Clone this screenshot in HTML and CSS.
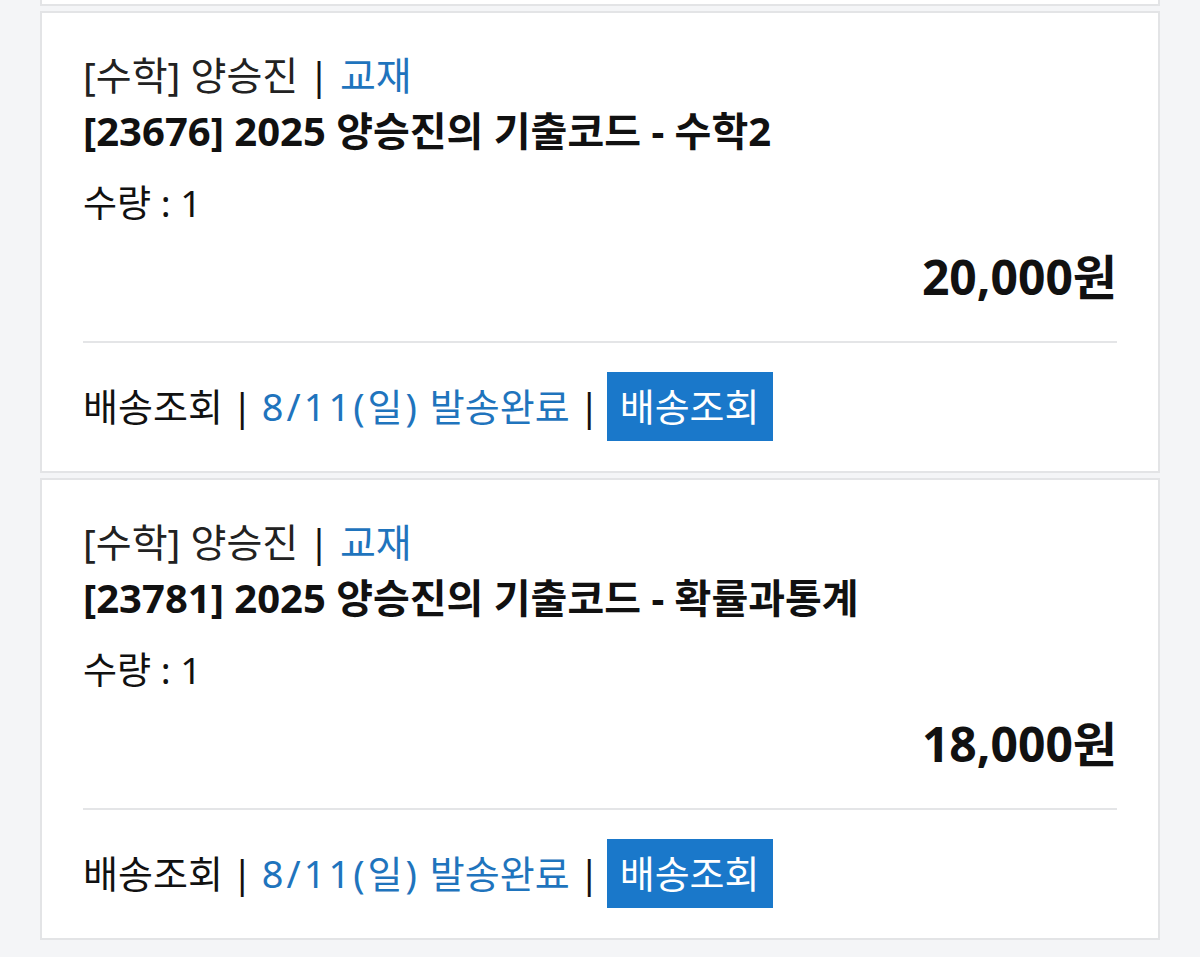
FILE: index.html
```html
<!DOCTYPE html>
<html lang="ko">
<head>
<meta charset="utf-8">
<link rel="stylesheet" href="styles.css">
</head>
<body>
<div class="list">
  <div class="card-stub"></div>

  <div class="card">
    <div class="info">
      <div class="meta">[수학] 양승진 <span class="sep">|</span> <span class="blue">교재</span></div>
      <div class="title">[23676] 2025 양승진의 기출코드 - 수학2</div>
      <div class="qty">수량 : 1</div>
      <div class="price">20,000원</div>
    </div>
    <div class="divider"></div>
    <div class="ship">
      <span>배송조회</span>
      <span class="sep">|</span>
      <span class="blue"><span class="date">8/11(일)</span> 발송완료</span>
      <span class="sep">|</span>
      <span class="btn">배송조회</span>
    </div>
  </div>

  <div class="card">
    <div class="info">
      <div class="meta">[수학] 양승진 <span class="sep">|</span> <span class="blue">교재</span></div>
      <div class="title">[23781] 2025 양승진의 기출코드 - 확률과통계</div>
      <div class="qty">수량 : 1</div>
      <div class="price">18,000원</div>
    </div>
    <div class="divider"></div>
    <div class="ship">
      <span>배송조회</span>
      <span class="sep">|</span>
      <span class="blue"><span class="date">8/11(일)</span> 발송완료</span>
      <span class="sep">|</span>
      <span class="btn">배송조회</span>
    </div>
  </div>
</div>
</body>
</html>
```

FILE: styles.css
```css
html, body {
  margin: 0;
  padding: 0;
  background: #f4f5f7;
}
body {
  font-family: "Noto Sans", "Noto Sans CJK KR", sans-serif;
  color: #111;
  height: 957px;
  overflow: hidden;
}
.list {
  display: flex;
  flex-direction: column;
  gap: 5px;
  padding: 0 40px;
}
.card-stub {
  height: 4px;
  background: #fff;
  border: 2px solid #e3e4e6;
  border-top: none;
}
.card {
  background: #fff;
  border: 2px solid #e3e4e6;
  padding: 34px 41px 29px 41px;
  box-sizing: border-box;
  height: 462px;
}
.info {
  display: flex;
  flex-direction: column;
}
.meta {
  font-size: 39px;
  line-height: 56px;
  color: #222;
}
.title {
  font-size: 40px;
  line-height: 56px;
  font-weight: 700;
}
.qty {
  font-size: 37px;
  line-height: 56px;
  margin-top: 16px;
}
.price {
  font-size: 48px;
  line-height: 56px;
  font-weight: 700;
  text-align: right;
  margin-top: 18px;
}
.divider {
  height: 2px;
  background: #e4e5e7;
  margin-top: 36px;
}
.ship {
  display: flex;
  align-items: center;
  gap: 9px;
  margin-top: 29px;
  font-size: 38px;
  line-height: 69px;
}
.sep {
  color: #111;
}
.blue {
  color: #1f74bd;
}
.date {
  letter-spacing: 3px;
}
.btn {
  background: #1a78ca;
  color: #fff;
  height: 69px;
  width: 166px;
  margin-left: -2px;
  display: flex;
  align-items: center;
  justify-content: center;
}
```
